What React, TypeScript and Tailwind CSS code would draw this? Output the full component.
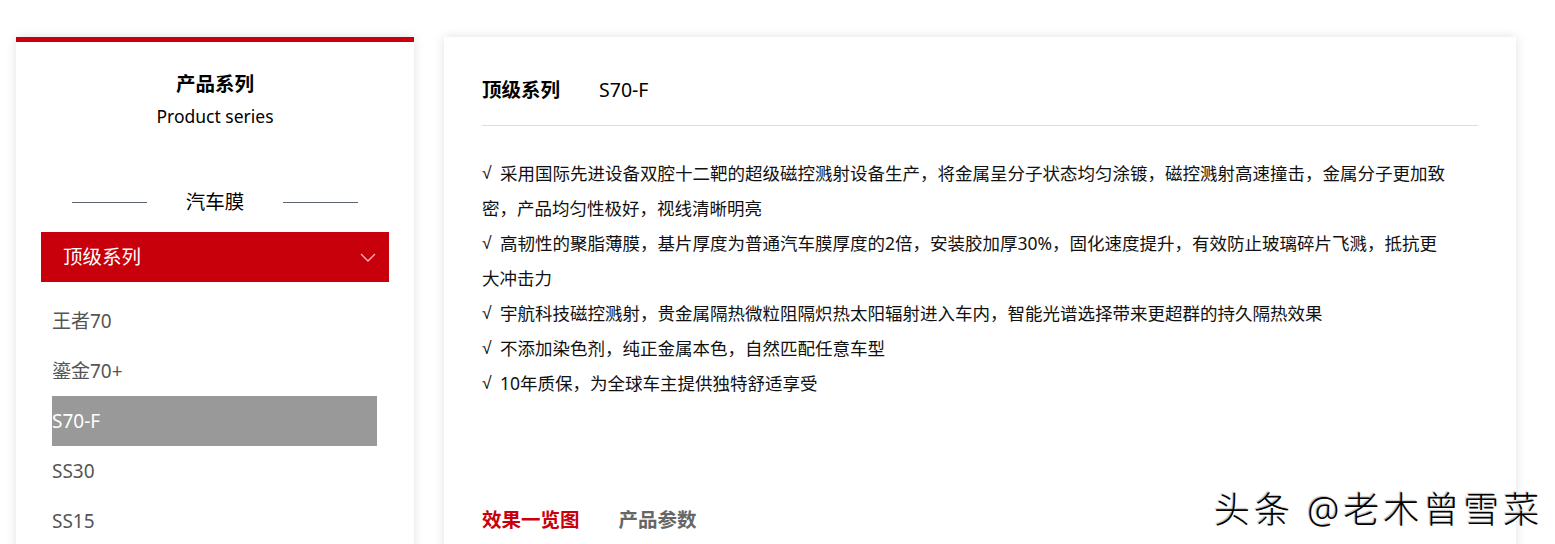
import React from "react";

const models = ["王者70", "鎏金70+", "S70-F", "SS30", "SS15", "SS05"];

const features = [
  "采用国际先进设备双腔十二靶的超级磁控溅射设备生产，将金属呈分子状态均匀涂镀，磁控溅射高速撞击，金属分子更加致密，产品均匀性极好，视线清晰明亮",
  "高韧性的聚脂薄膜，基片厚度为普通汽车膜厚度的2倍，安装胶加厚30%，固化速度提升，有效防止玻璃碎片飞溅，抵抗更大冲击力",
  "宇航科技磁控溅射，贵金属隔热微粒阻隔炽热太阳辐射进入车内，智能光谱选择带来更超群的持久隔热效果",
  "不添加染色剂，纯正金属本色，自然匹配任意车型",
  "10年质保，为全球车主提供独特舒适享受",
];

const App: React.FC = () => {
  const active = "S70-F";

  return (
    <div
      className="relative min-h-screen bg-white pt-[37px] pl-4 overflow-hidden"
      style={{ fontFamily: '"Noto Sans", "Noto Sans CJK SC", sans-serif' }}
    >
      <div className="flex gap-[30px] items-start">
        {/* 左侧产品系列 */}
        <aside className="w-[398px] h-[600px] shrink-0 bg-white border-t-[5px] border-[#c8000b] shadow-[0_0_10px_rgba(0,0,0,0.12)]">
          <div className="pt-[28px] text-center">
            <h2 className="text-[19.5px] leading-[28px] font-bold text-black">产品系列</h2>
            <p className="mt-[6px] text-[17.5px] leading-[24px] text-black">Product series</p>
          </div>

          <div className="mt-[60px] flex items-center justify-center gap-[39px]">
            <span className="w-[75px] h-px bg-[#5b6270]" />
            <span className="text-[19.5px] leading-[28px] text-black">汽车膜</span>
            <span className="w-[75px] h-px bg-[#5b6270]" />
          </div>

          <div className="mx-[25px] mt-[16px] h-[50px] bg-[#c8000b] flex items-center justify-between pl-[22px] pr-[13px]">
            <span className="text-[19.5px] text-white">顶级系列</span>
            <svg width="16" height="9" viewBox="0 0 16 9" fill="none">
              <path d="M1 1l7 7 7-7" stroke="#f2b3b6" strokeWidth="1.4" />
            </svg>
          </div>

          <ul className="mt-[14px] ml-[36px] w-[325px]">
            {models.map((m) => (
              <li
                key={m}
                className={
                  m === active
                    ? "h-[50px] flex items-center bg-[#999999] text-white text-[19px]"
                    : "h-[50px] flex items-center text-[#555555] text-[19px]"
                }
              >
                {m}
              </li>
            ))}
          </ul>
        </aside>

        {/* 右侧详情 */}
        <main className="w-[1072px] h-[600px] shrink-0 bg-white shadow-[0_0_10px_rgba(0,0,0,0.12)] px-[38px] pt-[38px]">
          <div className="flex items-center gap-[39px] h-[30px]">
            <span className="text-[19.5px] font-bold text-black">顶级系列</span>
            <span className="text-[19.5px] text-black">S70-F</span>
          </div>
          <div className="mt-[20px] h-px bg-[#dddddd]" />

          <div className="mt-[30px] w-[968px] text-[17.5px] leading-[35px] text-[#111111]">
            {features.map((f) => (
              <p key={f} className="h-auto">
                <span className="inline-block w-[18px] h-[35px] leading-[35px] align-top font-['Liberation_Sans']">√</span>
                {f}
              </p>
            ))}
          </div>

          <div className="mt-[104px] flex gap-[39px] text-[19.5px] font-bold">
            <span className="text-[#c8000b]">效果一览图</span>
            <span className="text-[#666666]">产品参数</span>
          </div>
        </main>
      </div>

      {/* 水印 */}
      <div className="absolute left-[1214px] top-[488px] text-[36px] leading-[44px] font-light text-black tracking-[4px] [text-shadow:1px_1px_1px_#ffffff,-1px_-1px_1px_#bbbbbb]">
        头条 @老木曾雪菜
      </div>
    </div>
  );
};

export default App;
